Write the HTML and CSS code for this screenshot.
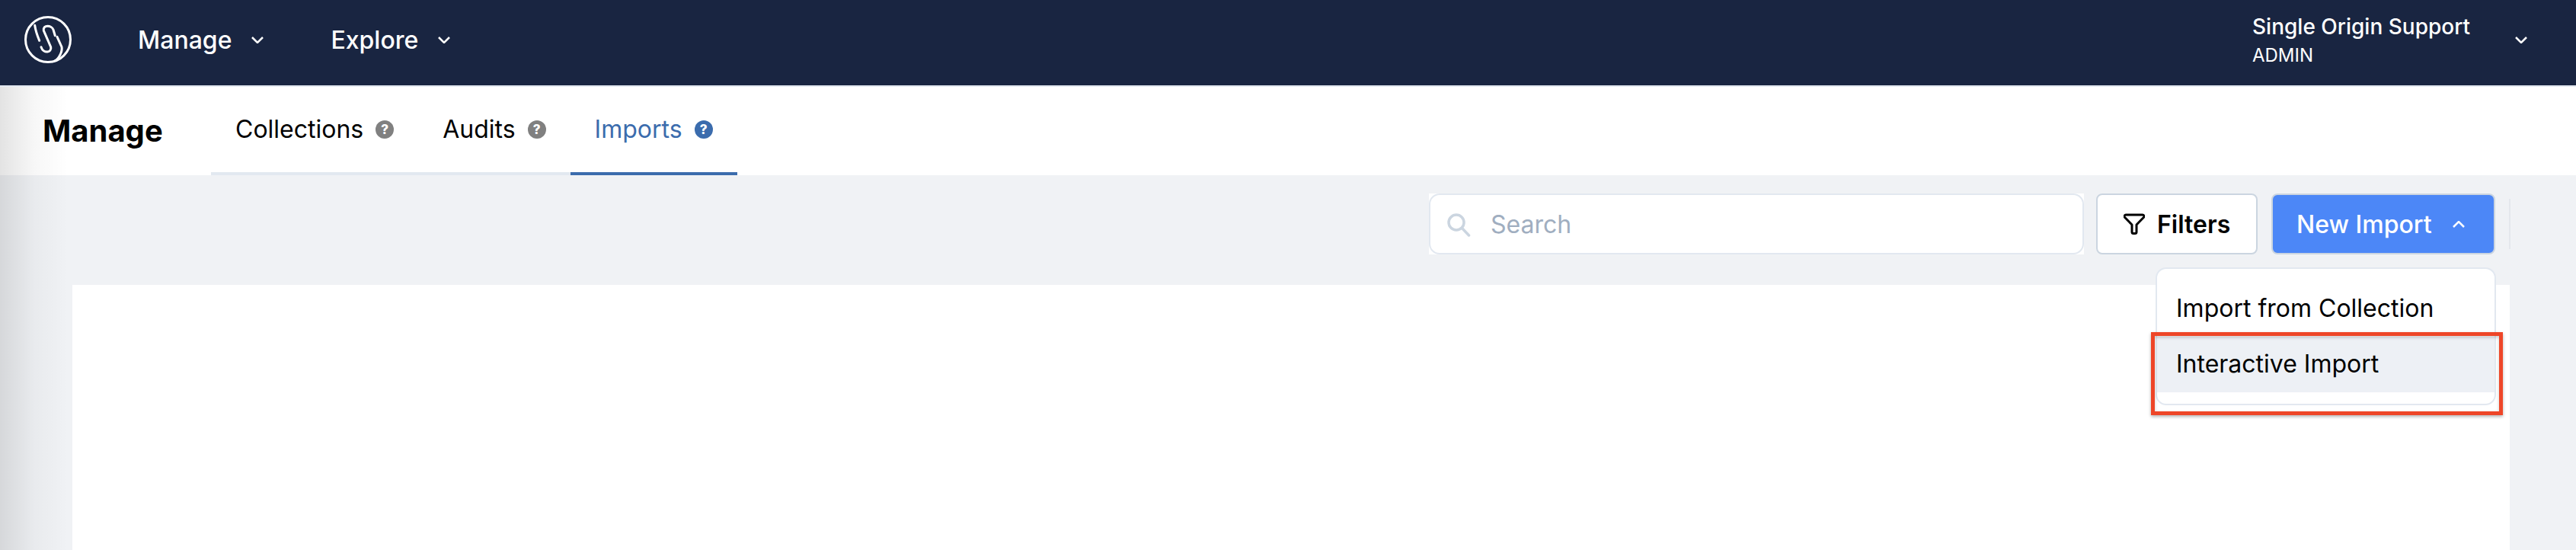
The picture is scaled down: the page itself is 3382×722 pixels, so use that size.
FILE: index.html
```html
<!DOCTYPE html>
<html lang="en">
<head>
    <meta charset="UTF-8">
    <title>Imports</title>
    <link rel="stylesheet" href="styles.css">
</head>
<body>
    <!-- Top nav -->
    <header class="topbar">
        <svg class="logo" viewBox="0 0 62 62" fill="none" stroke="#fff" stroke-width="3" stroke-linecap="round">
            <circle cx="31" cy="31" r="29.5"/>
            <path d="M13.700 12.300c1 7 3 13 6 20"/>
            <path d="M40.300 25.700L38 18C36 12 24 11 25.300 19L34.700 40.700C36.500 48 25 50 22 40.700"/>
            <path d="M43 27.300L49 40.700C50 46 46 56 39.700 59"/>
        </svg>
        <div class="topbar-item">Manage
            <svg class="chev" viewBox="0 0 16 9"><path d="M1 1l7 7 7-7"/></svg>
        </div>
        <div class="topbar-item">Explore
            <svg class="chev" viewBox="0 0 16 9"><path d="M1 1l7 7 7-7"/></svg>
        </div>
        <div class="account">
            <div class="account-text">
                <div class="account-name">Single Origin Support</div>
                <div class="account-role">ADMIN</div>
            </div>
            <svg class="chev" viewBox="0 0 16 9"><path d="M1 1l7 7 7-7"/></svg>
        </div>
    </header>

    <!-- Sub nav -->
    <nav class="subnav">
        <h1 class="subnav-title">Manage</h1>
        <div class="tabs">
            <div class="tab">Collections <span class="help">?</span></div>
            <div class="tab">Audits <span class="help">?</span></div>
            <div class="tab active">Imports <span class="help">?</span></div>
        </div>
    </nav>

    <main class="content">
        <div class="toolbar">
            <div class="search-wrap">
                <div class="search">
                    <svg class="search-icon" viewBox="0 0 31 31" fill="none" stroke="#cbd5e0" stroke-width="3.500">
                        <circle cx="12" cy="12" r="10"/>
                        <path d="M19.500 19.500l9 9.500" stroke-linecap="round"/>
                    </svg>
                    <span>Search</span>
                </div>
            </div>
            <button class="btn btn-filters">
                <svg class="filter-icon" viewBox="0 0 28 28" fill="none" stroke="#000" stroke-width="3" stroke-linejoin="round">
                    <path d="M3 2h22a2 2 0 0 1 1.500 3.300L17 15v9.500a2 2 0 0 1-2 2h-2a2 2 0 0 1-2-2V15L1.500 5.300A2 2 0 0 1 3 2z"/>
                </svg>
                Filters
            </button>
            <button class="btn btn-primary">New Import
                <svg class="chev" viewBox="0 0 16 9"><path d="M1 8l7-7 7 7"/></svg>
            </button>
            <div class="toolbar-divider"></div>
        </div>
        <div class="panel"></div>

        <div class="dropdown">
            <div class="dropdown-item">Import from Collection</div>
            <div class="dropdown-item hover">Interactive Import</div>
        </div>
        <div class="callout"></div>
    </main>

    <div class="edge-shadow"></div>
</body>
</html>
```

FILE: styles.css
```css
/* Reset */
* {
    margin: 0;
    padding: 0;
    box-sizing: border-box;
    font-family: Inter, "Liberation Sans", sans-serif;
}

html, body {
    height: 100%;
    overflow: hidden;
}

body {
    display: flex;
    flex-direction: column;
    background: #f0f2f5;
    color: #000;
    position: relative;
}

/* Top nav */
.topbar {
    display: flex;
    align-items: center;
    height: 114px;
    flex-shrink: 0;
    padding: 0 64px 8px 32px;
    background: #192541;
    border-bottom: 2px solid #e2e8f0;
    color: #fff;
}

.logo {
    width: 62px;
    height: 62px;
    margin-right: 87px;
}

.topbar-item {
    display: flex;
    align-items: center;
    gap: 26px;
    margin-right: 88px;
    font-size: 32px;
    font-weight: 500;
}

.chev {
    width: 16px;
    height: 9px;
    fill: none;
    stroke: currentColor;
    stroke-width: 2.500;
}

.account {
    display: flex;
    align-items: center;
    gap: 59px;
    margin-left: auto;
}

.account-name {
    font-size: 28px;
    font-weight: 500;
    line-height: 38px;
}

.account-role {
    margin-top: 4px;
    font-size: 24px;
    line-height: 30px;
}

/* Sub nav */
.subnav {
    display: flex;
    height: 116px;
    flex-shrink: 0;
    background: #fff;
}

.subnav-title {
    width: 277px;
    padding: 34px 0 0 56px;
    font-size: 40px;
    font-weight: 700;
    line-height: 48px;
}

.tabs {
    display: flex;
}

.tab {
    display: flex;
    align-items: flex-start;
    gap: 16px;
    padding: 36px 32px 0;
    border-bottom: 4px solid #e2e8f0;
    font-size: 32px;
    line-height: 40px;
}

.tab .help {
    display: flex;
    align-items: center;
    justify-content: center;
    width: 24px;
    height: 24px;
    margin-top: 8px;
    border-radius: 50%;
    background: #808080;
    color: #fff;
    font-size: 17px;
    font-weight: 800;
    line-height: 1;
}

.tab.active {
    border-bottom-color: #3b6cad;
    color: #3b6cad;
}

.tab.active .help {
    background: #3b6cad;
}

/* Main area */
.content {
    flex: 1;
    position: relative;
    padding: 0 87px 0 95px;
}

.toolbar {
    display: flex;
    align-items: flex-start;
    justify-content: flex-end;
    height: 144px;
    margin-right: -1px;
    padding-top: 24px;
}

.search-wrap {
    width: 860px;
    height: 80px;
    margin-right: 16px;
    background: #fff;
}

.search {
    display: flex;
    align-items: center;
    gap: 26px;
    height: 100%;
    padding: 0 22px;
    background: #fff;
    border: 2px solid #e2e8f0;
    border-radius: 14px;
    color: #a0aec0;
    font-size: 32px;
}

.search-icon {
    width: 31px;
    height: 31px;
    margin-top: 2px;
}

.btn {
    display: flex;
    align-items: center;
    height: 80px;
    border-radius: 8px;
    border: 2px solid #cbd5e0;
    font-size: 32px;
    font-weight: 600;
}

.btn-filters {
    width: 212px;
    margin-right: 18px;
    padding-left: 34px;
    gap: 16px;
    background: #fff;
    color: #000;
}

.filter-icon {
    width: 28px;
    height: 28px;
}

.btn-primary {
    width: 294px;
    padding-left: 31px;
    gap: 27px;
    background: #4c87f7;
    color: #fff;
    font-weight: 500;
}

.toolbar-divider {
    width: 2px;
    height: 66px;
    margin: 7px 0 0 18px;
    background: #e4e7ec;
}

.panel {
    height: 348px;
    background: #fff;
}

/* Dropdown and the red marker over it */
.dropdown {
    position: absolute;
    top: 121px;
    left: 2830px;
    width: 447px;
    height: 181px;
    padding: 16px 0;
    background: #fff;
    border: 2px solid #e2e8f0;
    border-radius: 14px;
}

.dropdown-item {
    height: 73px;
    padding-left: 25px;
    font-size: 32px;
    line-height: 72px;
}

.dropdown-item.hover {
    background: #edf0f5;
}

.callout {
    position: absolute;
    top: 206px;
    left: 2824px;
    width: 462px;
    height: 109px;
    border: 5px solid #ee4628;
    box-shadow: 0 2px 4px rgba(0, 0, 0, 0.3), inset 0 2px 4px rgba(0, 0, 0, 0.2);
}

/* Soft shadow on the left edge */
.edge-shadow {
    position: absolute;
    top: 114px;
    left: 0;
    bottom: 0;
    width: 90px;
    background: linear-gradient(to right, rgba(0, 0, 0, 0.11), rgba(0, 0, 0, 0.03) 50%, rgba(0, 0, 0, 0));
}
```
